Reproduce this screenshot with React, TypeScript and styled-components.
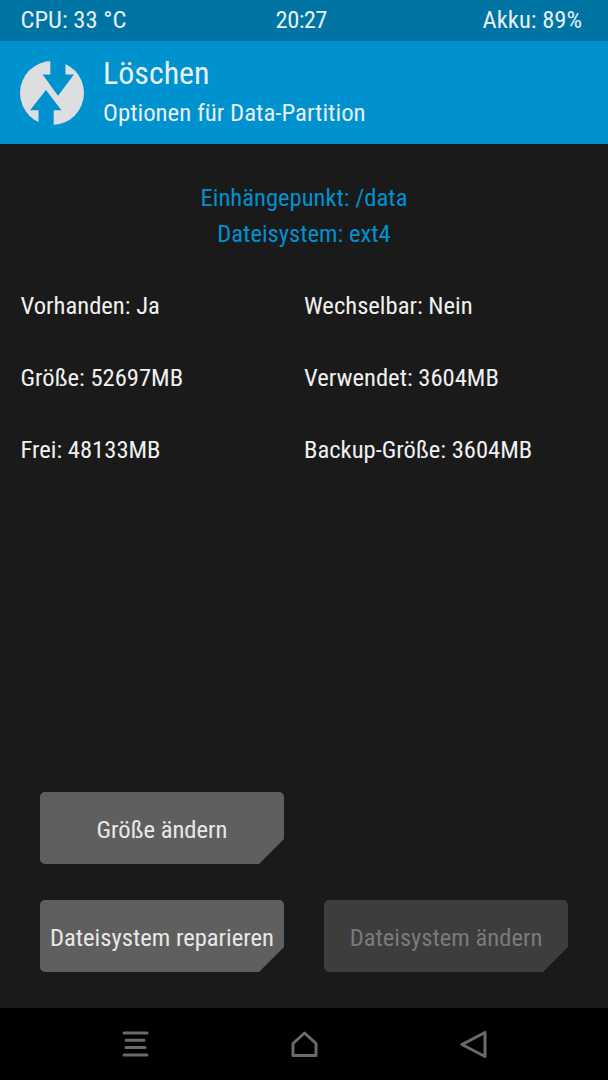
import React from 'react';
import styled, { createGlobalStyle } from 'styled-components';

const GlobalStyle = createGlobalStyle`
  html, body {
    margin: 0;
    padding: 0;
    background: #1a1a1a;
  }
  body {
    font-family: 'Roboto', 'Liberation Sans', sans-serif;
    font-stretch: 75%;
    font-weight: 400;
    color: #ffffff;
  }
`;

const Screen = styled.div`
  width: 608px;
  height: 1080px;
  display: flex;
  flex-direction: column;
  overflow: hidden;
`;

const StatusBar = styled.div`
  height: 41px;
  flex: none;
  display: grid;
  grid-template-columns: 1fr auto 1fr;
  align-items: center;
  padding: 0 26px 2px 20.5px;
  box-sizing: border-box;
  background: #0074a3;
  font-size: 24.6px;
  color: #e6f0f5;
`;

const StatusTime = styled.span`
  letter-spacing: -0.6px;
`;

const StatusRight = styled.span`
  text-align: right;
`;

const Header = styled.div`
  height: 103px;
  flex: none;
  display: flex;
  align-items: center;
  gap: 20px;
  padding-left: 20px;
  background: #0091cf;
`;

const Titles = styled.div`
  display: flex;
  flex-direction: column;
  gap: 9px;
  color: #e6f0f5;
  margin: -3px 0 0 -1px;
`;

const Title = styled.div`
  font-size: 32px;
  line-height: 34px;
`;

const Subtitle = styled.div`
  font-size: 24.8px;
  line-height: 28px;
`;

const Content = styled.div`
  flex: 1;
  display: flex;
  flex-direction: column;
  background: #1a1a1a;
  padding-top: 36px;
`;

const MountLine = styled.div`
  height: 36px;
  line-height: 36px;
  text-align: center;
  font-size: 24.6px;
  color: #0091cf;
`;

const InfoGrid = styled.div`
  display: grid;
  grid-template-columns: 283.5px 1fr;
  grid-auto-rows: 72px;
  padding: 36px 0 0 20.5px;
  font-size: 24.6px;
  line-height: 36px;
  color: #f0f0f0;
`;

const Actions = styled.div`
  margin-top: auto;
  display: grid;
  grid-template-columns: 244px 244px;
  grid-auto-rows: 72px;
  gap: 36px 40px;
  padding: 0 0 36px 40px;
`;

const ActionButton = styled.div<{ $disabled?: boolean }>`
  display: flex;
  align-items: center;
  justify-content: center;
  padding-top: 2px;
  box-sizing: border-box;
  font-size: 24.6px;
  white-space: nowrap;
  border-radius: 5px;
  background: ${props => (props.$disabled ? '#3d3d3d' : '#5f5f5f')};
  color: ${props => (props.$disabled ? '#7a7a7a' : '#e8e8e8')};
  clip-path: polygon(0 0, 100% 0, 100% calc(100% - 25px), calc(100% - 25px) 100%, 0 100%);
`;

const NavBar = styled.div`
  height: 72px;
  flex: none;
  display: flex;
  align-items: center;
  justify-content: center;
  gap: 142px;
  background: #000000;
`;

const NavIcon = styled.svg`
  width: 27px;
  height: 27px;
  fill: none;
  stroke: #6b6b6b;
  stroke-width: 3;
  stroke-linecap: round;
  stroke-linejoin: round;
`;

const Logo = () => (
  <svg width="64" height="64" viewBox="30 32 190 190" style={{ flex: 'none' }}>
    <circle cx="125" cy="127" r="95" fill="#dcdee0" />
    <polygon points="120,20 165,20 165,72 190,72 143,135 97,72 120,72" fill="#0091cf" />
    <polygon points="107,118 153,178 130,178 130,235 85,235 85,178 60,178" fill="#0091cf" />
  </svg>
);

const App: React.FC = () => {
  return (
    <Screen>
      <GlobalStyle />
      <StatusBar>
        <span>CPU: 33 °C</span>
        <StatusTime>20:27</StatusTime>
        <StatusRight>Akku: 89%</StatusRight>
      </StatusBar>
      <Header>
        <Logo />
        <Titles>
          <Title>Löschen</Title>
          <Subtitle>Optionen für Data-Partition</Subtitle>
        </Titles>
      </Header>
      <Content>
        <MountLine>Einhängepunkt: /data</MountLine>
        <MountLine>Dateisystem: ext4</MountLine>
        <InfoGrid>
          <div>Vorhanden: Ja</div>
          <div>Wechselbar: Nein</div>
          <div>Größe: 52697MB</div>
          <div>Verwendet: 3604MB</div>
          <div>Frei: 48133MB</div>
          <div>Backup-Größe: 3604MB</div>
        </InfoGrid>
        <Actions>
          <ActionButton>Größe ändern</ActionButton>
          <div />
          <ActionButton>Dateisystem reparieren</ActionButton>
          <ActionButton $disabled>Dateisystem ändern</ActionButton>
        </Actions>
      </Content>
      <NavBar>
        <NavIcon viewBox="0 0 27 27">
          <path d="M2 2h23M4 9.3h18M4 16.6h19M2 24h23" />
        </NavIcon>
        <NavIcon viewBox="0 0 27 27">
          <path d="M13.5 2 L25 12.5 V24.5 H2 V12.5 Z" />
        </NavIcon>
        <NavIcon viewBox="0 0 27 27">
          <path d="M25 1.5 V25.5 L2 13.5 Z" />
        </NavIcon>
      </NavBar>
    </Screen>
  );
};

export default App;
